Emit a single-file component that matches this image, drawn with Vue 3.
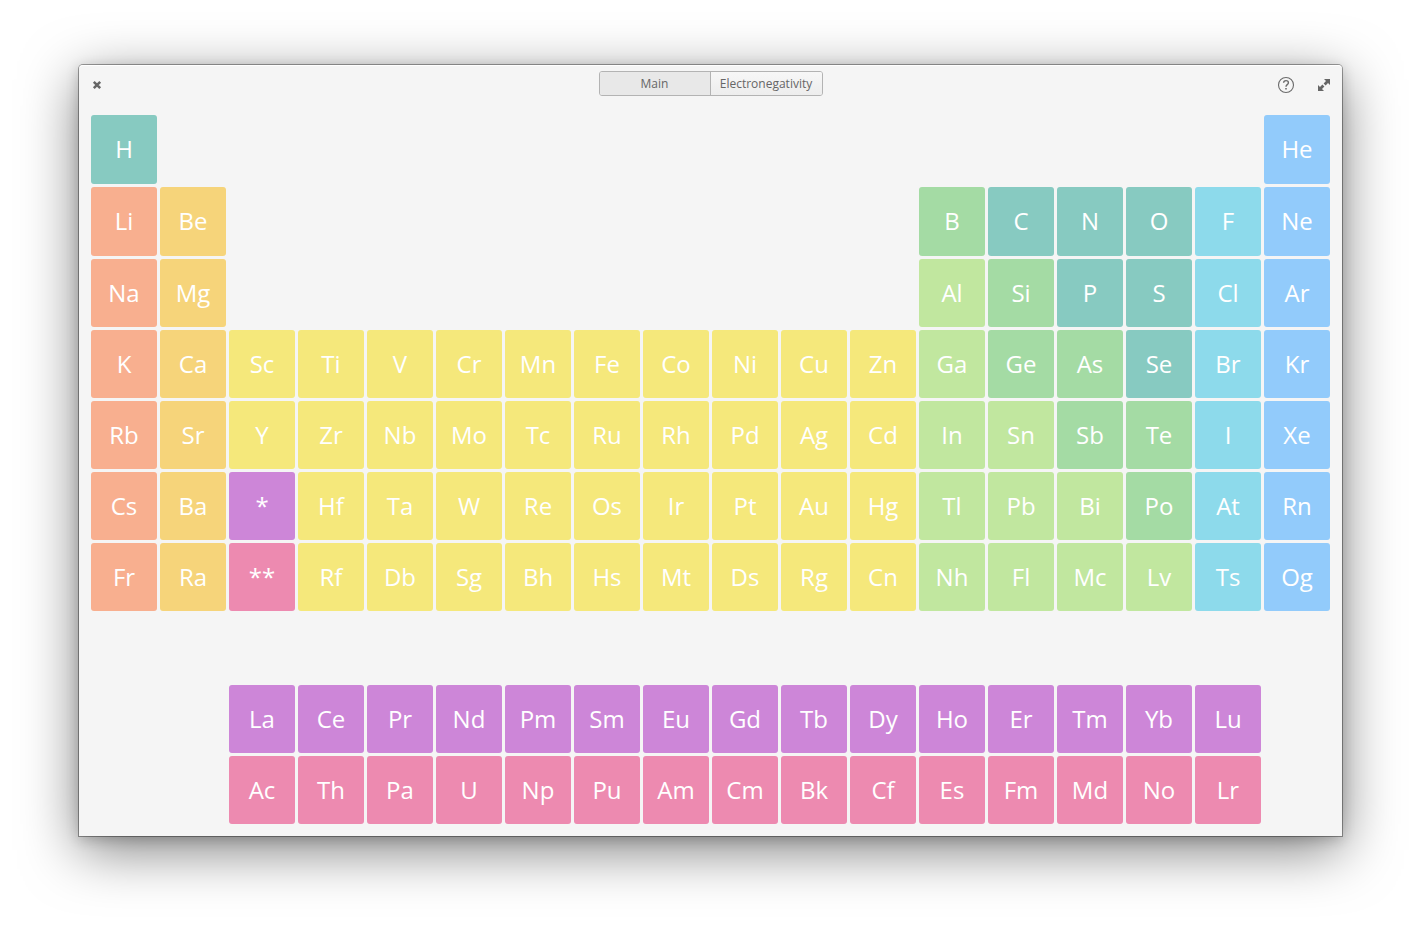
<script setup>
import { ref } from 'vue'

const view = ref('Main')
const views = ['Main', 'Electronegativity']

// Each run: grid row, first grid column, "symbol:category" items, and an optional category for the whole run.
const rows = [
  [1, 1, 'H:nonmetal'],
  [1, 18, 'He:noble'],
  [2, 1, 'Li:alkali Be:earth'],
  [2, 13, 'B:metalloid C:nonmetal N:nonmetal O:nonmetal F:halogen Ne:noble'],
  [3, 1, 'Na:alkali Mg:earth'],
  [3, 13, 'Al:post Si:metalloid P:nonmetal S:nonmetal Cl:halogen Ar:noble'],
  [4, 1, 'K:alkali Ca:earth Sc:transition Ti:transition V:transition Cr:transition Mn:transition Fe:transition Co:transition Ni:transition Cu:transition Zn:transition Ga:post Ge:metalloid As:metalloid Se:nonmetal Br:halogen Kr:noble'],
  [5, 1, 'Rb:alkali Sr:earth Y:transition Zr:transition Nb:transition Mo:transition Tc:transition Ru:transition Rh:transition Pd:transition Ag:transition Cd:transition In:post Sn:post Sb:metalloid Te:metalloid I:halogen Xe:noble'],
  [6, 1, 'Cs:alkali Ba:earth *:lanthanide Hf:transition Ta:transition W:transition Re:transition Os:transition Ir:transition Pt:transition Au:transition Hg:transition Tl:post Pb:post Bi:post Po:metalloid At:halogen Rn:noble'],
  [7, 1, 'Fr:alkali Ra:earth **:actinide Rf:transition Db:transition Sg:transition Bh:transition Hs:transition Mt:transition Ds:transition Rg:transition Cn:transition Nh:post Fl:post Mc:post Lv:post Ts:halogen Og:noble'],
  [9, 3, 'La Ce Pr Nd Pm Sm Eu Gd Tb Dy Ho Er Tm Yb Lu', 'lanthanide'],
  [10, 3, 'Ac Th Pa U Np Pu Am Cm Bk Cf Es Fm Md No Lr', 'actinide'],
]

const elements = rows.flatMap(([row, start, list, shared]) =>
  list.split(' ').map((item, i) => {
    const [symbol, category] = item.split(':')
    return { symbol, category: category || shared, row, column: start + i }
  })
)
</script>

<template>
  <div class="desktop">
    <main class="window">
      <header class="titlebar">
        <div class="side start">
          <button class="icon-button" aria-label="Close">
            <svg width="16" height="16" viewBox="0 0 16 16">
              <path d="M4.8 4.8l6.4 6.4M11.2 4.8l-6.4 6.4" fill="none" stroke="#666" stroke-width="2.5" />
            </svg>
          </button>
        </div>
        <div class="switcher">
          <button
            v-for="name in views"
            :key="name"
            :class="{ active: view === name }"
            :aria-pressed="view === name"
            @click="view = name"
          >{{ name }}</button>
        </div>
        <div class="side end">
          <button class="icon-button" aria-label="Help">
            <svg width="18" height="18" viewBox="0 0 18 18" fill="none" stroke="#6b6b6b">
              <circle cx="9" cy="9" r="7.5" stroke-width="1.1" />
              <path d="M6.6 6.8C6.6 5.3 7.6 4.6 9 4.6s2.4.8 2.4 2.1c0 1.9-2.4 1.9-2.4 4" stroke-width="1.4" />
              <path d="M9 11.9v1.6" stroke-width="1.6" />
            </svg>
          </button>
          <button class="icon-button" aria-label="Maximize">
            <svg width="16" height="16" viewBox="0 0 16 16" fill="#666">
              <path d="M14 2v6l-2-2-2.4 2.4-2-2L10 4 8 2z" />
              <path d="M2 14V8l2 2 2.4-2.4 2 2L6 12l2 2z" />
            </svg>
          </button>
        </div>
      </header>
      <section class="table" aria-label="Periodic table">
        <button
          v-for="el in elements"
          :key="el.symbol"
          class="cell"
          :class="el.category"
          :style="{ gridRow: el.row, gridColumn: el.column }"
        >{{ el.symbol }}</button>
      </section>
    </main>
  </div>
</template>

<style>
body {
  background: #fff;
}
</style>

<style scoped>
.desktop {
  padding: 65px 79px 93px;
  font-family: "Open Sans", "Noto Sans", sans-serif;
}

.window {
  padding: 0 12px 12px;
  background: #f5f5f5;
  border-radius: 4px 4px 0 0;
  box-shadow:
    inset 0 1px 0 #fff,
    0 0 0 1px rgba(0, 0, 0, 0.35),
    0 3px 14px rgba(0, 0, 0, 0.2),
    0 14px 56px rgba(0, 0, 0, 0.5);
}

button {
  margin: 0;
  padding: 0;
  border: 0;
  background: none;
  font-family: inherit;
  cursor: pointer;
}

.titlebar {
  display: flex;
  align-items: center;
  height: 37px;
  margin-bottom: 13px;
}

.side {
  display: flex;
  flex: 1;
  align-items: center;
  gap: 21px;
  padding-top: 3px;
}

.start {
  margin-left: -2px;
}

.end {
  justify-content: flex-end;
  margin-right: -2px;
}

.icon-button {
  display: flex;
}

.switcher {
  display: grid;
  grid-template-columns: 111px 111px;
  border: 1px solid #b3b3b3;
  border-radius: 3px;
  overflow: hidden;
}

.switcher button {
  height: 23px;
  font-size: 12px;
  line-height: 23px;
  color: #666;
  background: linear-gradient(#f7f7f7, #ededed);
}

.switcher button.active {
  border-right: 1px solid #b3b3b3;
  background: #e8e8e8;
}

.table {
  display: grid;
  grid-template-columns: repeat(18, 1fr);
  grid-template-rows: 69px 69px;
  grid-auto-rows: 68px;
  gap: 3px;
}

.cell {
  min-width: 0;
  padding-bottom: 1px;
  border-radius: 3px;
  color: #fff;
  font-size: 24px;
  line-height: 32px;
}

.nonmetal { background: #87cac1; }
.noble { background: #92cbfb; }
.alkali { background: #f8af8f; }
.earth { background: #f6d47a; }
.metalloid { background: #a4dba4; }
.post { background: #c1e79f; }
.halogen { background: #8ddaeb; }
.transition { background: #f5e87b; }
.lanthanide { background: #cd86d8; }
.actinide { background: #ed8ab0; }
</style>
